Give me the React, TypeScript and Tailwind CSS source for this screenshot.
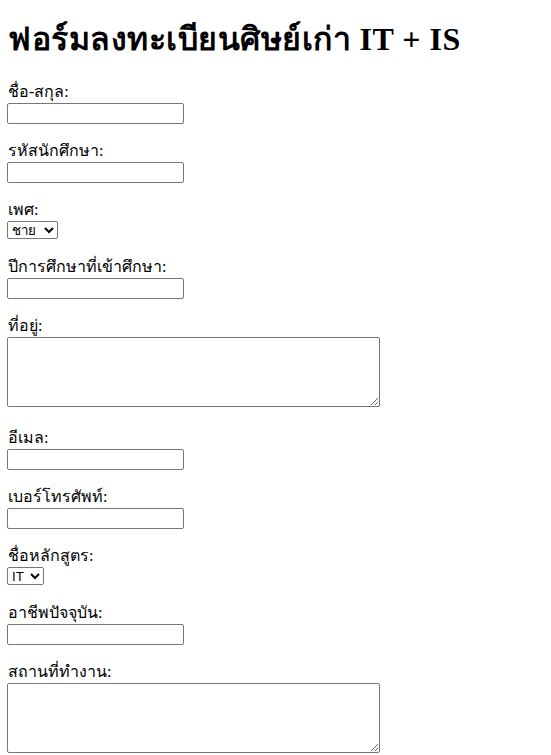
const inputClasses =
  'block -ml-px h-[21px] w-[177px] rounded-[2px] border border-[#767676] bg-white px-[2px] text-[13.33px]'
const textareaClasses =
  'block -ml-px h-[70px] w-[373px] rounded-[2px] border border-[#767676] bg-white px-[2px] text-[13.33px]'
const selectClasses =
  'block -ml-px h-[18px] rounded-[2px] border border-[#767676] bg-white text-[13.33px] font-[Arial,"Liberation_Sans",sans-serif]'

function Label({ text }: { text: string }) {
  return <label className="block h-[23px] leading-[23px]">{text}</label>
}

function TextField({ label, type = 'text' }: { label: string; type?: string }) {
  return (
    <div className="mb-[15px]">
      <Label text={label} />
      <input type={type} className={inputClasses} />
    </div>
  )
}

function AreaField({ label, last }: { label: string; last?: boolean }) {
  return (
    <div className={last ? '' : 'mb-[19px]'}>
      <Label text={label} />
      <textarea className={textareaClasses} />
    </div>
  )
}

export default function App() {
  return (
    <div className="min-h-screen bg-white p-2 font-['Liberation_Serif',serif] text-base text-black">
      <h1 className="mt-[13.44px] mb-[21.44px] text-[32px] leading-[37px] font-bold tracking-[0.5px]">
        ฟอร์มลงทะเบียนศิษย์เก่า IT + IS
      </h1>
      <form>
        <TextField label="ชื่อ-สกุล:" />
        <TextField label="รหัสนักศึกษา:" />
        <div className="mb-[16px]">
          <Label text="เพศ:" />
          <select className={`${selectClasses} w-[51px]`} defaultValue="ชาย">
            <option>ชาย</option>
            <option>หญิง</option>
          </select>
        </div>
        <TextField label="ปีการศึกษาที่เข้าศึกษา:" />
        <AreaField label="ที่อยู่:" />
        <TextField label="อีเมล:" type="email" />
        <TextField label="เบอร์โทรศัพท์:" type="tel" />
        <div className="mb-[16px]">
          <Label text="ชื่อหลักสูตร:" />
          <select className={`${selectClasses} w-[37px]`} defaultValue="IT">
            <option>IT</option>
            <option>IS</option>
          </select>
        </div>
        <TextField label="อาชีพปัจจุบัน:" />
        <AreaField label="สถานที่ทำงาน:" last />
      </form>
    </div>
  )
}
